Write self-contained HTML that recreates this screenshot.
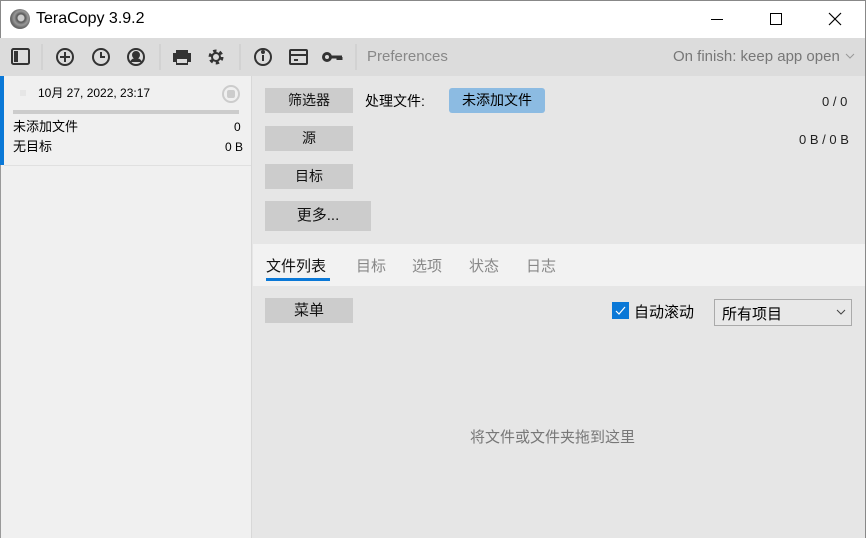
<!DOCTYPE html>
<html><head><meta charset="utf-8"><style>
*{margin:0;padding:0;box-sizing:border-box}
body{width:866px;height:538px;overflow:hidden;font-family:"Liberation Sans","Noto Sans CJK SC",sans-serif;background:#e6e6e6;position:relative;font-size:13px;color:#000}
.a{position:absolute}
.btn{position:absolute;background:#cccccc;text-align:center;font-size:14px;color:#111}
.tab{position:absolute;top:255px;font-size:15px;color:#888}
</style></head><body>
<div class="a" style="left:0;top:0;width:866px;height:38px;background:#fff;border:1px solid #888;border-bottom:none"></div>
<div class="a" style="left:10px;top:9px;width:20px;height:20px;border-radius:50%;background:radial-gradient(circle at 55% 45%,#ccc 0 3px,#555 4px,#999 7px,#666 10px)"></div>
<div class="a" style="left:36px;top:10px;font-size:16px">TeraCopy 3.9.2</div>
<div class="a" style="left:711px;top:19px;width:12px;height:1px;background:#000"></div>
<div class="a" style="left:770px;top:13px;width:12px;height:12px;border:1px solid #000"></div>
<svg class="a" style="left:828px;top:12px" width="14" height="14"><path d="M1 1L13 13M13 1L1 13" stroke="#000" stroke-width="1.2"/></svg>
<div class="a" style="left:0;top:38px;width:866px;height:38px;background:#dcdcdc"></div>
<svg class="a" style="left:0;top:38px" width="450" height="38" fill="none" stroke="#333" stroke-width="2">
<rect x="12" y="11" width="17" height="15" rx="1.5"/><rect x="14" y="13" width="4" height="11" fill="#333" stroke="none"/>
<line x1="42" y1="6" x2="42" y2="32" stroke="#c8c8c8" stroke-width="1"/>
<circle cx="65" cy="19" r="8"/><path d="M65 14v10M60 19h10"/>
<circle cx="101" cy="19" r="8"/><path d="M101 14v5h4"/>
<circle cx="136" cy="19" r="8"/><circle cx="136" cy="17" r="3" fill="#333"/><path d="M131 24c2-4 8-4 10 0" fill="#333"/>
<line x1="160" y1="6" x2="160" y2="32" stroke="#c8c8c8" stroke-width="1"/>
<path d="M176 12h12v3h3v9h-3v3h-12v-3h-3v-9h3z" fill="#333" stroke="none"/><rect x="177" y="21" width="10" height="4" fill="#dcdcdc" stroke="none"/>
<circle cx="216" cy="19" r="5.5" stroke-width="4" stroke-dasharray="3 2.8"/><circle cx="216" cy="19" r="4"/>
<line x1="240" y1="6" x2="240" y2="32" stroke="#c8c8c8" stroke-width="1"/>
<circle cx="263" cy="19" r="8"/><path d="M263 17v6" /><circle cx="263" cy="14" r="1" fill="#333"/>
<rect x="290" y="12" width="17" height="14" rx="1"/><path d="M290 17h17"/><path d="M294 22h4"/>
<circle cx="327" cy="19" r="3.5" stroke-width="3"/><path d="M330 19h12M338 19v3M341 19v3" stroke-width="3"/>
<line x1="356" y1="6" x2="356" y2="32" stroke="#c8c8c8" stroke-width="1"/>
</svg>
<div class="a" style="left:367px;top:48px;font-size:15px;color:#888">Preferences</div>
<div class="a" style="left:673px;top:48px;font-size:15px;color:#777">On finish: keep app open</div>
<svg class="a" style="left:845px;top:53px" width="10" height="6"><path d="M1 1l4 4 4-4" stroke="#999" fill="none"/></svg>
<div class="a" style="left:0;top:76px;width:252px;height:462px;background:#f0f0f0;border-right:1px solid #d8d8d8;border-left:1px solid #999"></div>
<div class="a" style="left:0;top:76px;width:4px;height:89px;background:#0a78d7"></div>
<div class="a" style="left:4px;top:165px;width:247px;height:1px;background:#e0e0e0"></div>
<div class="a" style="left:38px;top:84px;font-size:12px">10月 27, 2022, 23:17</div>
<div class="a" style="left:20px;top:90px;width:6px;height:6px;background:#e6e6e6"></div>
<div class="a" style="left:222px;top:85px;width:18px;height:18px;border-radius:50%;border:2px solid #ccc"></div>
<div class="a" style="left:227px;top:90px;width:8px;height:8px;border-radius:2px;background:#ccc"></div>
<div class="a" style="left:13px;top:110px;width:226px;height:4px;background:#cccccc"></div>
<div class="a" style="left:13px;top:116px">未添加文件</div><div class="a" style="left:234px;top:120px;font-size:12px">0</div>
<div class="a" style="left:13px;top:136px">无目标</div><div class="a" style="left:225px;top:140px;font-size:12px">0 B</div>
<div class="btn" style="left:265px;top:88px;width:88px;height:25px;line-height:25px">筛选器</div>
<div class="a" style="left:365px;top:91px;font-size:14px">处理文件:</div>
<div class="a" style="left:449px;top:88px;width:96px;height:25px;line-height:25px;background:#8cbbe2;border-radius:3px;text-align:center;font-size:14px">未添加文件</div>
<div class="a" style="left:822px;top:94px;font-size:13px;color:#222">0 / 0</div>
<div class="btn" style="left:265px;top:126px;width:88px;height:25px;line-height:25px">源</div>
<div class="a" style="left:799px;top:132px;font-size:13px;color:#222">0 B / 0 B</div>
<div class="btn" style="left:265px;top:164px;width:88px;height:25px;line-height:25px">目标</div>
<div class="btn" style="left:265px;top:201px;width:106px;height:30px;line-height:30px;font-size:15px">更多...</div>
<div class="a" style="left:253px;top:244px;width:613px;height:42px;background:#f2f2f2"></div>
<div class="tab" style="left:266px;color:#111">文件列表</div>
<div class="a" style="left:266px;top:278px;width:64px;height:3px;background:#0a78d7"></div>
<div class="tab" style="left:356px">目标</div>
<div class="tab" style="left:412px">选项</div>
<div class="tab" style="left:469px">状态</div>
<div class="tab" style="left:526px">日志</div>
<div class="btn" style="left:265px;top:298px;width:88px;height:25px;line-height:25px;font-size:15px">菜单</div>
<div class="a" style="left:612px;top:302px;width:17px;height:17px;background:#0a78d7"></div>
<svg class="a" style="left:612px;top:302px" width="17" height="17"><path d="M4 9l3 3 6-7" stroke="#fff" fill="none" stroke-width="1.2"/></svg>
<div class="a" style="left:634px;top:301px;font-size:15px">自动滚动</div>
<div class="a" style="left:714px;top:299px;width:138px;height:27px;border:1px solid #aaa;background:#e8e8e8"></div>
<div class="a" style="left:722px;top:303px;font-size:15px">所有项目</div>
<svg class="a" style="left:836px;top:309px" width="10" height="6"><path d="M1 1l4 4 4-4" stroke="#444" fill="none"/></svg>
<div class="a" style="left:470px;top:426px;font-size:15px;color:#777">将文件或文件夹拖到这里</div>
<div class="a" style="left:865px;top:0;width:1px;height:538px;background:#888"></div>
</body></html>
